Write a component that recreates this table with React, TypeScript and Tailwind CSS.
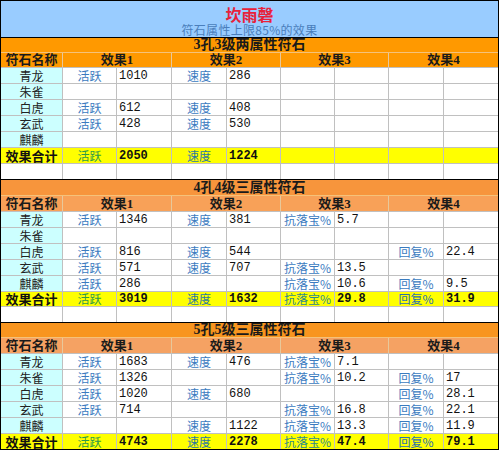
import React from "react"

type Eff = [string, string] | null

interface Section {
  title: string
  titleBg: string
  headBg: string
  titleH: string
  headH: string
  totalH: string
  blankH: string | null
  rows: Eff[][]
  total: Eff[]
}

const COLS = "grid grid-cols-[62px_54px_55px_55px_54px_54px_54px_55px_54px]"
const NAMES = ["青龙", "朱雀", "白虎", "玄武", "麒麟"]
const LINE = "border-[#c0c0c0]"

const sections: Section[] = [
  {
    title: "3孔3级两属性符石",
    titleBg: "bg-[#ff9900]",
    headBg: "bg-[#ff9900]",
    titleH: "h-[16px]",
    headH: "h-[15px]",
    totalH: "h-[16px]",
    blankH: "h-[15px]",
    rows: [
      [["活跃", "1010"], ["速度", "286"], null, null],
      [null, null, null, null],
      [["活跃", "612"], ["速度", "408"], null, null],
      [["活跃", "428"], ["速度", "530"], null, null],
      [null, null, null, null],
    ],
    total: [["活跃", "2050"], ["速度", "1224"], null, null],
  },
  {
    title: "4孔4级三属性符石",
    titleBg: "bg-[#f7953c]",
    headBg: "bg-[#f8a158]",
    titleH: "h-[17px]",
    headH: "h-[16px]",
    totalH: "h-[15px]",
    blankH: "h-[15px]",
    rows: [
      [["活跃", "1346"], ["速度", "381"], ["抗落宝%", "5.7"], null],
      [null, null, null, null],
      [["活跃", "816"], ["速度", "544"], null, ["回复%", "22.4"]],
      [["活跃", "571"], ["速度", "707"], ["抗落宝%", "13.5"], null],
      [["活跃", "286"], null, ["抗落宝%", "10.6"], ["回复%", "9.5"]],
    ],
    total: [["活跃", "3019"], ["速度", "1632"], ["抗落宝%", "29.8"], ["回复%", "31.9"]],
  },
  {
    title: "5孔5级三属性符石",
    titleBg: "bg-[#f8951f]",
    headBg: "bg-[#f5a263]",
    titleH: "h-[16px]",
    headH: "h-[16px]",
    totalH: "h-[15px]",
    blankH: null,
    rows: [
      [["活跃", "1683"], ["速度", "476"], ["抗落宝%", "7.1"], null],
      [["活跃", "1326"], null, ["抗落宝%", "10.2"], ["回复%", "17"]],
      [["活跃", "1020"], ["速度", "680"], null, ["回复%", "28.1"]],
      [["活跃", "714"], null, ["抗落宝%", "16.8"], ["回复%", "22.1"]],
      [null, ["速度", "1122"], ["抗落宝%", "13.3"], ["回复%", "11.9"]],
    ],
    total: [["活跃", "4743"], ["速度", "2278"], ["抗落宝%", "47.4"], ["回复%", "79.1"]],
  },
]

// label colours in the yellow total row
const totalColor: Record<string, string> = {
  "活跃": "text-[#2e9a4a]",
  "速度": "text-[#2a78a0]",
  "抗落宝%": "text-[#2e8a8a]",
  "回复%": "text-[#2a6fb0]",
}

function EffCells({ eff, total }: { eff: Eff; total?: boolean }) {
  const cell = `border-r ${LINE} flex items-center overflow-hidden whitespace-nowrap leading-[14px]`
  return (
    <>
      <div className={`${cell} justify-center text-[12px] ${total ? totalColor[eff?.[0] ?? "活跃"] : "text-[#3b7bbf]"}`}>
        {eff?.[0]}
      </div>
      <div
        className={`${cell} pl-[2px] font-['Liberation_Mono',monospace] text-[12px] text-[#111] ${
          total ? "font-bold" : ""
        }`}
      >
        {eff?.[1]}
      </div>
    </>
  )
}

function Row({ name, effs, h, total, last }: { name: string; effs: Eff[]; h: string; total?: boolean; last?: boolean }) {
  return (
    <div
      className={`${COLS} ${h} ${last ? "" : `border-b ${LINE}`} ${total ? "bg-[#ffff00]" : "bg-white"} [&>*:last-child]:border-r-0`}
    >
      <div
        className={`border-r ${LINE} flex items-center justify-center overflow-hidden leading-[14px] ${
          total ? "font-bold text-[13px] text-[#111]" : "bg-[#ccffff] text-[12px] text-[#222]"
        }`}
      >
        {name}
      </div>
      {effs.map((e, i) => (
        <EffCells key={i} eff={e} total={total} />
      ))}
    </div>
  )
}

function SectionBlock({ s, isLast }: { s: Section; isLast: boolean }) {
  const head =
    "flex items-center justify-center overflow-hidden leading-[14px] font-bold text-[13px] text-[#1a1a1a] font-['Liberation_Serif','Noto_Sans_CJK_SC',serif]"
  return (
    <div>
      <div
        className={`${s.titleH} ${s.titleBg} border-t border-black border-b border-b-[#f5c27a] flex items-center justify-center overflow-hidden font-bold text-[14px] leading-[14px] text-[#1a1a1a] font-['Liberation_Serif','Noto_Sans_CJK_SC',serif]`}
      >
        {s.title}
      </div>
      <div className={`${COLS} ${s.headH} ${s.headBg} border-b ${LINE}`}>
        <div className={`${head} border-r border-[#e8c89a]`}>符石名称</div>
        <div className={`${head} col-span-2 border-r border-[#e8c89a]`}>效果1</div>
        <div className={`${head} col-span-2 border-r border-[#e8c89a]`}>效果2</div>
        <div className={`${head} col-span-2 border-r border-[#e8c89a]`}>效果3</div>
        <div className={`${head} col-span-2`}>效果4</div>
      </div>
      {s.rows.map((r, i) => (
        <Row key={i} name={NAMES[i]} effs={r} h="h-[16px]" />
      ))}
      <Row name="效果合计" effs={s.total} h={s.totalH} total last={isLast} />
      {s.blankH && (
        <div className={`${COLS} ${s.blankH} bg-white [&>*]:border-r [&>*]:border-[#c0c0c0] [&>*:last-child]:border-r-0`}>
          {Array.from({ length: 9 }).map((_, i) => (
            <div key={i} />
          ))}
        </div>
      )}
    </div>
  )
}

export default function App() {
  return (
    <div className="w-[500px] h-[452px] bg-white font-['Noto_Sans_CJK_SC',sans-serif]">
      <div className="w-[499px] border border-black">
        <div className="h-[36px] bg-[#99ccff] flex flex-col items-center pt-[5px]">
          <div className="h-[17px] text-[16px] font-bold leading-[17px] text-[#e8213a]">坎雨磬</div>
          <div className="h-[14px] text-[12px] leading-[14px] text-[#4a7ebb] tracking-[0.3px]">符石属性上限85%的效果</div>
        </div>
        {sections.map((s, i) => (
          <SectionBlock key={i} s={s} isLast={i === sections.length - 1} />
        ))}
      </div>
    </div>
  )
}
